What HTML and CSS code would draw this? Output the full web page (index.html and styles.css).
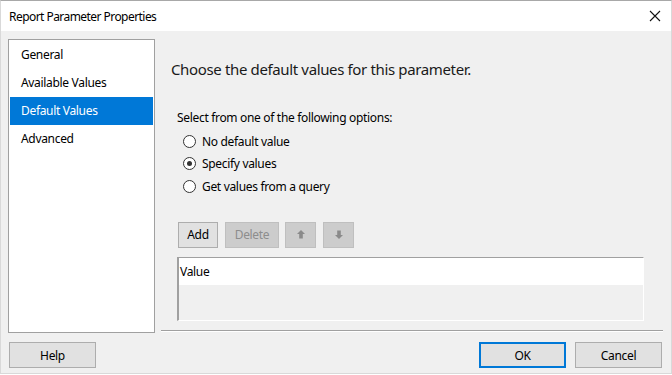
FILE: index.html
```html
<!DOCTYPE html>
<html>
<head>
<meta charset="utf-8">
<link rel="stylesheet" href="styles.css">
</head>
<body>
<div class="dialog">
  <div class="titlebar">
    <span class="title">Report Parameter Properties</span>
    <svg class="close" width="12" height="12" viewBox="0 0 12 12"><path d="M1 1 L11 11 M11 1 L1 11" stroke="#111" stroke-width="1.1" fill="none"/></svg>
  </div>
  <div class="content">
    <div class="main">
      <ul class="nav">
        <li class="nav-item">General</li>
        <li class="nav-item">Available Values</li>
        <li class="nav-item selected">Default Values</li>
        <li class="nav-item">Advanced</li>
      </ul>
      <div class="panel">
        <div class="heading">Choose the default values for this parameter.</div>
        <div class="prompt">Select from one of the following options:</div>
        <div class="options">
          <div class="option"><span class="radio"></span><span>No default value</span></div>
          <div class="option"><span class="radio checked"></span><span>Specify values</span></div>
          <div class="option"><span class="radio"></span><span>Get values from a query</span></div>
        </div>
        <div class="toolbar">
          <button class="btn tb-add">Add</button>
          <button class="btn disabled tb-delete">Delete</button>
          <button class="btn disabled tb-arrow"><svg width="10" height="11" viewBox="0 0 10 11"><path d="M5 1 L9 5 L6.8 5 L6.8 9.5 L3.2 9.5 L3.2 5 L1 5 Z" fill="#8a8a8a"/></svg></button>
          <button class="btn disabled tb-arrow"><svg width="10" height="11" viewBox="0 0 10 11"><path d="M5 10 L9 6 L6.8 6 L6.8 1.5 L3.2 1.5 L3.2 6 L1 6 Z" fill="#8a8a8a"/></svg></button>
        </div>
        <div class="grid">
          <div class="grid-header">Value</div>
        </div>
        <div class="spacer"></div>
        <div class="separator"></div>
      </div>
    </div>
    <div class="footer">
      <button class="btn fbtn">Help</button>
      <div class="footer-right">
        <button class="btn fbtn default">OK</button>
        <button class="btn fbtn">Cancel</button>
      </div>
    </div>
  </div>
</div>
</body>
</html>
```
FILE: styles.css
```css
* { box-sizing: border-box; }
html, body { margin: 0; padding: 0; }
body {
  width: 672px;
  height: 375px;
  background: #ffffff;
  font-family: "Noto Sans", "Open Sans", sans-serif;
  font-size: 12px;
  letter-spacing: -0.32px;
  color: #000;
  overflow: hidden;
}
.dialog {
  width: 672px;
  height: 374px;
  border: 1px solid #a8a8a8;
  border-bottom-color: #d9d9d9;
  border-left-color: #d9d9d9;
  border-right-color: #d9d9d9;
  display: flex;
  flex-direction: column;
}
.titlebar {
  height: 30px;
  background: #fff;
  display: flex;
  align-items: center;
  justify-content: space-between;
  padding: 0 10px 0 8px;
}
.title { font-size: 12px; letter-spacing: -0.55px; }
.close { display: block; }
.content {
  flex: 1;
  background: #f0f0f0;
  display: flex;
  flex-direction: column;
  padding: 8px 8px 0 7px;
}
.main { display: flex; height: 294px; }
.nav {
  list-style: none;
  margin: 0;
  width: 147px;
  background: #fff;
  border: 1px solid #a0a0a0;
  padding: 1px;
}
.nav-item {
  height: 28px;
  line-height: 28px;
  padding-left: 11px;
  white-space: nowrap;
}
.nav-item.selected { background: #0078d7; color: #fff; }
.panel {
  flex: 1;
  margin-left: 6px;
  display: flex;
  flex-direction: column;
}
.heading {
  font-size: 15px;
  line-height: 20px;
  letter-spacing: -0.36px;
  margin: 20px 0 0 10px;
  color: #1a1a1a;
}
.prompt { margin: 31px 0 0 16px; line-height: 16px; }
.options { margin: 4px 0 0 22px; display: flex; flex-direction: column; }
.option { display: flex; align-items: center; height: 22.5px; }
.radio {
  width: 13px;
  height: 13px;
  border: 1px solid #333;
  border-radius: 50%;
  background: #fff;
  margin-right: 6px;
  display: flex;
  align-items: center;
  justify-content: center;
}
.radio.checked::after {
  content: "";
  width: 5px;
  height: 5px;
  border-radius: 50%;
  background: #333;
}
.toolbar { display: flex; gap: 7px; margin: 24px 0 0 17px; }
.btn {
  font-family: inherit;
  font-size: 12px;
  letter-spacing: inherit;
  height: 26px;
  background: #e1e1e1;
  border: 1px solid #adadad;
  color: #000;
  padding: 0;
  display: flex;
  align-items: center;
  justify-content: center;
}
.tb-add { width: 40px; }
.tb-delete { width: 54px; margin-right: -1px; }
.tb-arrow { width: 31px; }
.btn.disabled { background: #cccccc; border-color: #bfbfbf; color: #8d8d8d; }
.grid {
  margin: 9px 19px 0 16px;
  height: 64px;
  border-top: 1px solid #a0a0a0;
  border-left: 2px solid #a0a0a0;
  border-right: 1px solid #fff;
  border-bottom: 1px solid #fff;
  background: #f0f0f0;
}
.grid-header {
  height: 27px;
  background: #fff;
  line-height: 27px;
  padding-left: 1px;
}
.spacer { flex: 1; }
.separator {
  height: 2px;
  border-top: 1px solid #a0a0a0;
  border-bottom: 1px solid #fff;
  margin: 0 0 1px 0;
}
.footer {
  display: flex;
  justify-content: space-between;
  margin-top: 9px;
  padding: 0 1px 0 1px;
}
.footer-right { display: flex; gap: 9px; }
.fbtn { width: 87px; height: 26px; }
.fbtn.default { border: 2px solid #0078d7; }
```
